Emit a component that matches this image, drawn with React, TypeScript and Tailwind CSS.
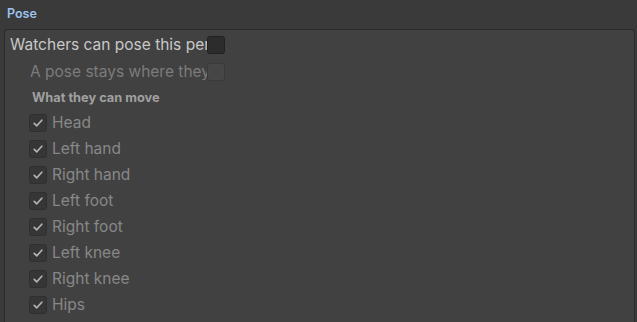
import React from "react";

const parts = ["Head", "Left hand", "Right hand", "Left foot", "Right foot", "Left knee", "Right knee", "Hips"];

function Check() {
  return (
    <div className="w-[18px] h-[18px] rounded-[3px] bg-[#363636] border border-[#2f2f2f] flex items-center justify-center shrink-0">
      <svg width="12" height="12" viewBox="0 0 12 12" fill="none">
        <path d="M2.2 6.3 L4.8 8.8 L9.8 3.2" stroke="#b4b4b4" strokeWidth="1.7" strokeLinecap="round" strokeLinejoin="round" />
      </svg>
    </div>
  );
}

export default function App() {
  return (
    <div
      className="w-[637px] h-[322px] overflow-hidden bg-[#3a3a3a] flex flex-col"
      style={{ fontFamily: "Inter, 'Noto Sans', sans-serif" }}
    >
      <div className="h-[29px] pl-[7px] flex items-center text-[12.5px] font-semibold text-[#9ec2f0]">Pose</div>
      <div className="ml-[4px] mr-[2px] flex-1 bg-[#414141] border border-[#2b2b2b] border-b-0 rounded-t-[4px] flex flex-col">
        <div className="h-[27px] mt-[1px] flex items-center pl-[5px]">
          <div className="w-[197px] overflow-hidden whitespace-nowrap text-[15.5px] text-[#c8c8c8]">Watchers can pose this person</div>
          <div className="w-[18px] h-[18px] rounded-[3px] bg-[#2c2c2c] border border-[#212121]" />
        </div>
        <div className="h-[27px] flex items-center pl-[25px]">
          <div className="w-[177px] overflow-hidden whitespace-nowrap text-[15.5px] text-[#7c7c7c]">A pose stays where they leave it</div>
          <div className="w-[18px] h-[18px] rounded-[3px] bg-[#464646] border border-[#3a3a3a]" />
        </div>
        <div className="h-[25px] flex items-center pl-[27px] text-[12.8px] font-bold text-[#a0a0a0]">What they can move</div>
        {parts.map((p) => (
          <div key={p} className="h-[26px] flex items-center pl-[24px] gap-[5px] shrink-0">
            <Check />
            <span className="text-[15.5px] text-[#888888]">{p}</span>
          </div>
        ))}
      </div>
    </div>
  );
}
